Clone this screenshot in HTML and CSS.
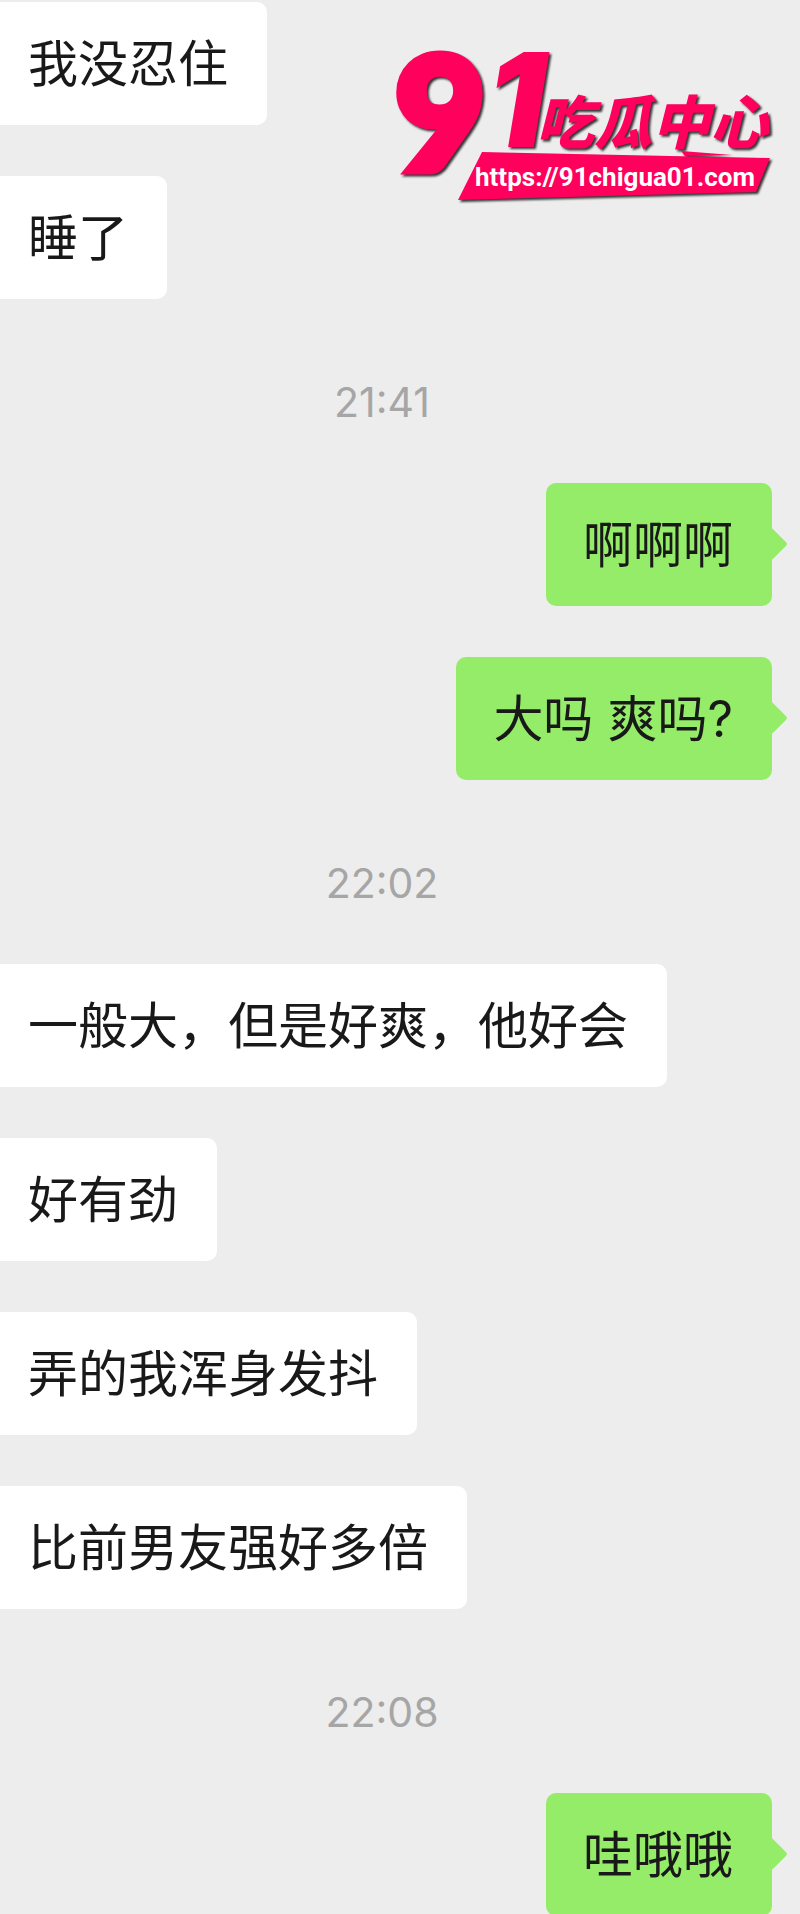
FILE: index.html
```
<!DOCTYPE html>
<html lang="zh-CN">
  <head>
    <meta charset="utf-8">
    <meta name="viewport" content="width=device-width, initial-scale=1">
    <title>聊天记录</title>
    <link rel="stylesheet" href="styles.css">
  </head>
  <body>
    <main class="chat">
      <p class="bubble">我没忍住</p>
      <p class="bubble">睡了</p>
      <time class="time">21:41</time>
      <p class="bubble me">啊啊啊</p>
      <p class="bubble me">大吗 爽吗?</p>
      <time class="time">22:02</time>
      <p class="bubble">一般大，但是好爽，他好会</p>
      <p class="bubble">好有劲</p>
      <p class="bubble">弄的我浑身发抖</p>
      <p class="bubble">比前男友强好多倍</p>
      <time class="time">22:08</time>
      <p class="bubble me">哇哦哦</p>
    </main>

    <a class="watermark" href="https://91chigua01.com">
      <svg width="400" height="180" viewBox="0 0 400 180">
        <g class="logo">
          <text class="nine" x="15" y="140">9</text>
          <text class="one" x="107" y="117">1</text>
          <text class="name" x="156" y="114">吃瓜中心</text>
          <path d="M102 122 L390 128 L376 162 L78 170 Z" />
          <path d="M301 121 L352 125 L305 126 Z" />
        </g>
        <text class="url" x="95" y="156">https://91chigua01.com</text>
      </svg>
    </a>
  </body>
</html>
```
FILE: styles.css
```
body {
  margin: 0;
  background: #ededed;
  color: #191919;
  font-family: Inter, "Noto Sans CJK SC", sans-serif;
}

.chat {
  display: flex;
  flex-direction: column;
  align-items: flex-start;
  gap: 51px;
  padding: 2px 28px 0 0;
}

.bubble {
  position: relative;
  margin: 0;
  padding: 28px 39px 27px 28px;
  border-radius: 0 10px 10px 0;
  background: #fff;
  font-size: 50px;
  line-height: 68px;
}

.bubble.me {
  align-self: flex-end;
  padding: 28px 39px 27px 37px;
  border-radius: 10px;
  background: #95ec69;
}

/* tail */
.bubble.me::after {
  content: "";
  position: absolute;
  top: 50%;
  right: -11px;
  width: 24px;
  height: 24px;
  margin-top: -13px;
  border-radius: 3px;
  background: #95ec69;
  transform: rotate(45deg);
}

.time {
  align-self: center;
  padding: 22px 8px 0 0;
  color: #a6a6a6;
  font-size: 41px;
  line-height: 60px;
}

.watermark {
  position: absolute;
  top: 30px;
  right: 20px;
}
.watermark svg { display: block; overflow: visible; }

.logo {
  fill: #ff005c;
  font-style: italic;
  font-weight: 900;
  filter: drop-shadow(2px 2px 1px #333);
}
.nine {
  font-family: Lato, sans-serif;
  font-size: 156px;
  font-style: normal;
  stroke: #ff005c;
  stroke-width: 9px;
}
.one { font-family: Inter, sans-serif; font-size: 130px; }
.name { font-family: "Noto Sans CJK SC", sans-serif; font-size: 58px; }
.url {
  fill: #fff;
  font-family: Roboto, sans-serif;
  font-size: 26px;
  font-weight: bold;
}
```
